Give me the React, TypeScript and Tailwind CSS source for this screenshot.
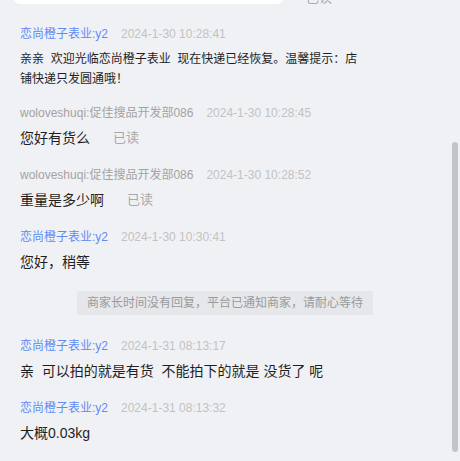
import React from "react";

const FONT = { fontFamily: '"Liberation Sans", "Noto Sans CJK SC", sans-serif' };

type Msg = {
  name: string;
  time: string;
  text: string;
  seller: boolean;
  read?: boolean;
};

function Header({ name, time, seller }: { name: string; time: string; seller: boolean }) {
  return (
    <div className="flex items-center text-[12px] leading-[20px] whitespace-nowrap">
      <span className={seller ? "text-[#5f8cf3]" : "text-[#a3a3a3]"}>{name}</span>
      <span className="ml-[13px] text-[#c2c2c2]">{time}</span>
    </div>
  );
}

function Message({ m, first }: { m: Msg; first?: boolean }) {
  return (
    <div className={first ? "flex flex-col mt-[14px]" : "flex flex-col mt-[16px]"}>
      <Header name={m.name} time={m.time} seller={m.seller} />
      <div className="mt-[4px] flex items-center text-[14px] leading-[22px] text-[#1f1f1f] whitespace-pre">
        <span>{m.text}</span>
        {m.read && <span className="ml-[23px] text-[13px] text-[#a8a8a8]">已读</span>}
      </div>
    </div>
  );
}

export default function App() {
  const msgs: Msg[] = [
    { name: "woloveshuqi:促佳搜品开发部086", time: "2024-1-30 10:28:45", text: "您好有货么", seller: false, read: true },
    { name: "woloveshuqi:促佳搜品开发部086", time: "2024-1-30 10:28:52", text: "重量是多少啊", seller: false, read: true },
    { name: "恋尚橙子表业:y2", time: "2024-1-30 10:30:41", text: "您好，稍等", seller: true },
  ];
  const msgs2: Msg[] = [
    { name: "恋尚橙子表业:y2", time: "2024-1-31 08:13:32", text: "大概0.03kg", seller: true },
  ];
  return (
    <div className="relative w-[460px] h-[461px] overflow-hidden bg-[#f0f1f5]" style={FONT}>
      <div className="flex flex-col pl-[20px]">
        {/* partially visible previous bubble */}
        <div className="flex items-end -mt-[30px] -ml-[6px]">
          <div className="w-[269px] h-[34px] bg-white rounded-[6px]" />
          <span className="ml-[23px] -mb-[4px] text-[13px] leading-[20px] text-[#a8a8a8]">已读</span>
        </div>

        <div className="flex flex-col mt-[20px]">
          <Header name="恋尚橙子表业:y2" time="2024-1-30 10:28:41" seller={true} />
          <div className="mt-[5px] w-[345px] text-[12px] leading-[20px] text-[#1f1f1f] whitespace-pre-wrap">
            {"亲亲  欢迎光临恋尚橙子表业  现在快递已经恢复。温馨提示：店铺快递只发圆通哦！"}
          </div>
        </div>

        {msgs.map((m, i) => (
          <Message key={i} m={m} first={i === 0} />
        ))}

        <div className="flex justify-center mt-[18px] pr-[20px]">
          <div className="ml-[-10px] h-[24px] px-[10px] flex items-center bg-[#e5e7eb] rounded-[2px] text-[12px] text-[#9a9a9a] whitespace-nowrap">
            商家长时间没有回复，平台已通知商家，请耐心等待
          </div>
        </div>

        <div className="flex flex-col mt-[21px]">
          <Header name="恋尚橙子表业:y2" time="2024-1-31 08:13:17" seller={true} />
          <div className="mt-[4px] text-[14px] leading-[22px] text-[#1f1f1f] whitespace-pre">
            {"亲  可以拍的就是有货  不能拍下的就是 没货了 呢"}
          </div>
        </div>

        {msgs2.map((m, i) => (
          <Message key={i} m={m} />
        ))}
      </div>

      {/* scrollbar thumb */}
      <div className="absolute left-[452px] top-[142px] w-[6px] h-[310px] rounded-[3px] bg-[#c1c4ca]" />
    </div>
  );
}
